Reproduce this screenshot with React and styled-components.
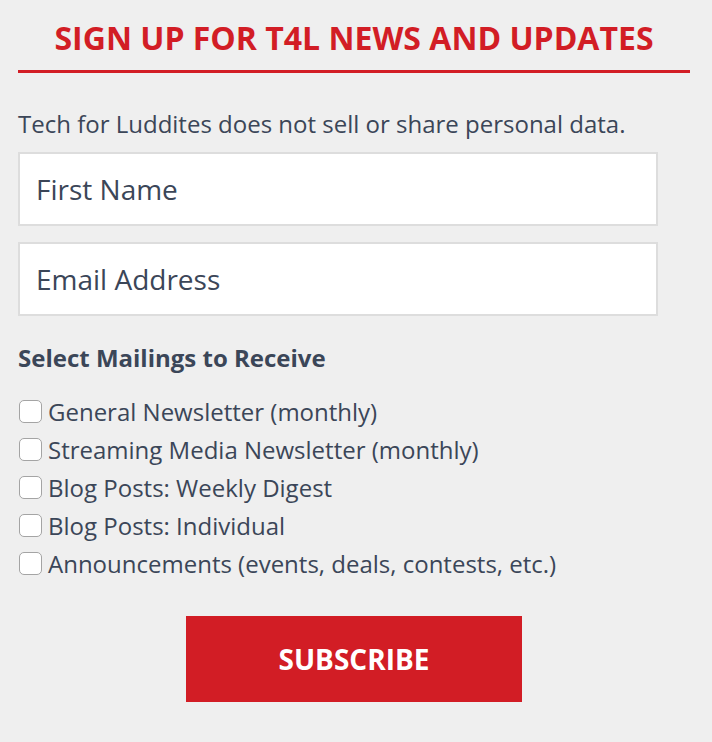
import React from "react";
import styled, { createGlobalStyle } from "styled-components";

const GlobalStyle = createGlobalStyle`
  body {
    margin: 0;
    background: #efefef;
    font-family: "Open Sans", "Noto Sans", sans-serif;
    color: #3b4658;
  }
`;

const Wrap = styled.div`
  width: 672px;
  padding: 0 22px 0 18px;
`;

const Heading = styled.h2`
  margin: 0;
  padding-top: 18px;
  padding-bottom: 12px;
  border-bottom: 3px solid #d21d25;
  color: #d21d25;
  font-size: 32px;
  font-weight: 700;
  text-align: center;
  line-height: 40px;
`;

const Note = styled.p`
  margin: 35px 0 0;
  font-size: 24px;
  line-height: 32px;
`;

const Form = styled.form`
  display: flex;
  flex-direction: column;
`;

const Field = styled.input`
  box-sizing: border-box;
  width: 640px;
  height: 74px;
  margin-top: ${(p) => p.$gap}px;
  padding: 0 16px;
  border: 2px solid #dddddd;
  background: #fff;
  font-family: inherit;
  font-size: 28px;
  color: #3b4658;
  outline: none;
  &::placeholder {
    color: #3b4658;
    opacity: 1;
  }
`;

const Legend = styled.h4`
  margin: 26px 0 0;
  font-size: 24px;
  font-weight: 700;
  line-height: 32px;
`;

const Options = styled.div`
  display: flex;
  flex-direction: column;
  margin-top: 18px;
`;

const Option = styled.label`
  display: flex;
  align-items: center;
  gap: 6px;
  height: 38px;
  font-size: 24px;
`;

const Box = styled.input`
  appearance: none;
  box-sizing: border-box;
  flex: none;
  width: 23px;
  height: 23px;
  margin: 0 0 0 1px;
  border: 1px solid #a4a4a4;
  border-radius: 5px;
  background: #fff;
`;

const Submit = styled.button`
  align-self: center;
  width: 336px;
  height: 86px;
  margin-top: 34px;
  border: none;
  background: #d21d25;
  color: #fff;
  font-family: inherit;
  font-size: 28px;
  font-weight: 700;
`;

const mailings = [
  "General Newsletter (monthly)",
  "Streaming Media Newsletter (monthly)",
  "Blog Posts: Weekly Digest",
  "Blog Posts: Individual",
  "Announcements (events, deals, contests, etc.)",
];

export default function App() {
  return (
    <>
      <GlobalStyle />
      <Wrap>
        <Heading>SIGN UP FOR T4L NEWS AND UPDATES</Heading>
        <Note>Tech for Luddites does not sell or share personal data.</Note>
        <Form onSubmit={(e) => e.preventDefault()}>
          <Field $gap={12} type="text" placeholder="First Name" />
          <Field $gap={16} type="email" placeholder="Email Address" />
          <Legend>Select Mailings to Receive</Legend>
          <Options>
            {mailings.map((m) => (
              <Option key={m}>
                <Box type="checkbox" />
                {m}
              </Option>
            ))}
          </Options>
          <Submit type="submit">SUBSCRIBE</Submit>
        </Form>
      </Wrap>
    </>
  );
}
